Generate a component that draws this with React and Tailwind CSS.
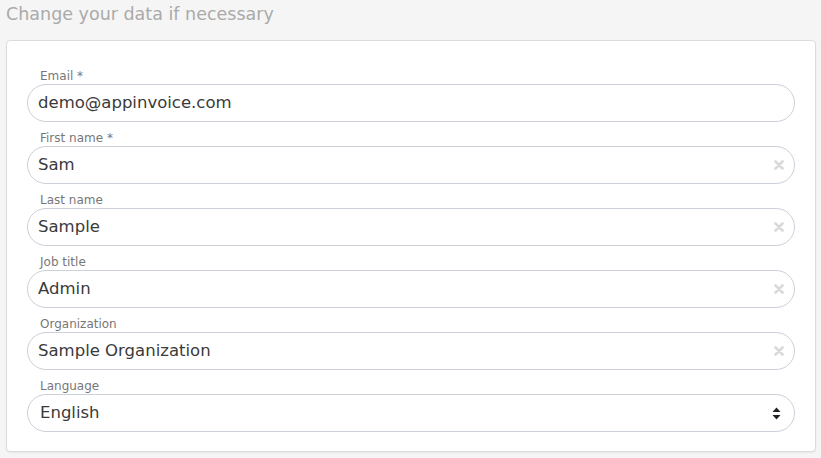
const fields = [
  { label: 'Email *', value: 'demo@appinvoice.com', clear: false },
  { label: 'First name *', value: 'Sam', clear: true },
  { label: 'Last name', value: 'Sample', clear: true },
  { label: 'Job title', value: 'Admin', clear: true },
  { label: 'Organization', value: 'Sample Organization', clear: true },
];

const inputCls =
  'flex h-[38px] w-full items-center rounded-full border border-[#ccd0d9] bg-white pl-[10px] pr-[10px] text-[16.5px] text-[#3a3a3a]';

const labelCls = 'block pl-[13px] text-[12px] leading-[15px] text-[#777]';

function ClearIcon() {
  return (
    <svg width="10" height="10" viewBox="0 0 10 10" className="text-[#d9d9d9]">
      <path d="M1.5 1.5 L8.5 8.5 M8.5 1.5 L1.5 8.5" stroke="currentColor" strokeWidth="2.6" strokeLinecap="round" />
    </svg>
  );
}

export default function App() {
  return (
    <div
      className="min-h-[458px] bg-[#f5f5f5] px-[6px] pt-[3px]"
      style={{ fontFamily: '"DejaVu Sans", sans-serif' }}
    >
      <h1 className="text-[17.5px] leading-[22px] text-[#aaaaaa]">Change your data if necessary</h1>
      <div className="mt-[15px] w-[810px] rounded-[4px] border border-[#dcdcdc] bg-white px-[20px] pb-[19px] pt-[28px] shadow-[0_1px_2px_rgba(0,0,0,0.06)]">
        <div className="flex flex-col gap-[9px]">
          {fields.map((f) => (
            <div key={f.label}>
              <label className={labelCls}>{f.label}</label>
              <div className={inputCls}>
                <span className="flex-1">{f.value}</span>
                {f.clear ? <ClearIcon /> : null}
              </div>
            </div>
          ))}
          <div>
            <label className={labelCls}>Language</label>
            <div className={`${inputCls} pl-[12px] pr-[13px]`}>
              <span className="flex-1">English</span>
              <svg width="9" height="13" viewBox="0 0 9 13" className="text-[#222]">
                <path d="M4.5 0.5 L8.5 5 H0.5 Z" fill="currentColor" />
                <path d="M4.5 12.5 L8.5 8 H0.5 Z" fill="currentColor" />
              </svg>
            </div>
          </div>
        </div>
      </div>
    </div>
  );
}
